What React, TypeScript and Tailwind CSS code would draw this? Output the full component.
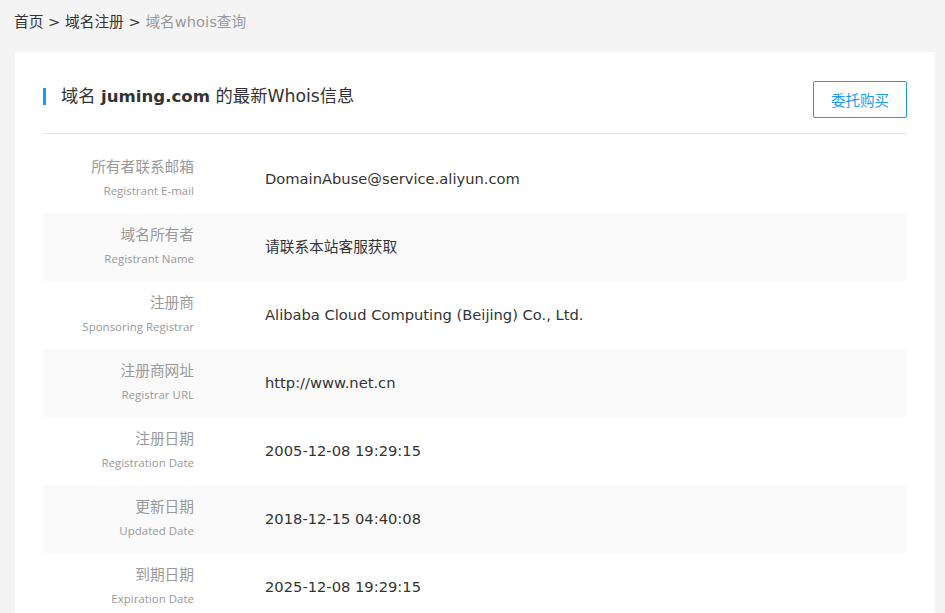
import React from "react";

const rows = [
  { cn: "所有者联系邮箱", en: "Registrant E-mail", v: "DomainAbuse@service.aliyun.com" },
  { cn: "域名所有者", en: "Registrant Name", v: "请联系本站客服获取" },
  { cn: "注册商", en: "Sponsoring Registrar", v: "Alibaba Cloud Computing (Beijing) Co., Ltd." },
  { cn: "注册商网址", en: "Registrar URL", v: "http://www.net.cn" },
  { cn: "注册日期", en: "Registration Date", v: "2005-12-08 19:29:15" },
  { cn: "更新日期", en: "Updated Date", v: "2018-12-15 04:40:08" },
  { cn: "到期日期", en: "Expiration Date", v: "2025-12-08 19:29:15" },
];

export default function App() {
  return (
    <div className="min-h-[613px] bg-[#f4f4f4] pl-[15px] pr-[10px] font-[family-name:'DejaVu_Sans','Noto_Sans_CJK_SC',sans-serif]">
      <div className="h-[52px] -ml-px pt-[11px] text-[14.7px] leading-[22px] text-[#333] whitespace-pre">
        <span>首页 &gt; 域名注册 &gt; </span>
        <span className="text-[#999]">域名whois查询</span>
      </div>
      <div className="bg-white px-[28px] pt-[29px] pb-[20px]">
        <div className="flex items-center justify-between border-b border-[#e6e6e6] pb-[15px]">
          <div className="-mt-[6px] flex items-center">
            <div className="h-[17px] w-[3px] bg-[#1a9bf0]" />
            <div className="ml-[15px] text-[17.3px] leading-[24px] text-[#333]">
              域名 <span className="font-bold text-[16.6px]">juming.com</span> 的最新Whois信息
            </div>
          </div>
          <button className="h-[37px] w-[94px] rounded-[2px] border border-[#1a9bf0] bg-white font-[family-name:'Noto_Sans_CJK_SC',sans-serif] text-[14.5px] text-[#1a9bf0]">
            委托购买
          </button>
        </div>
        <div className="mt-[11px]">
          {rows.map((r, i) => (
            <div
              key={r.cn}
              className={`flex h-[68px] ${i % 2 === 1 ? "bg-[#fafafa]" : "bg-white"}`}
            >
              <div className="w-[151px] pt-[10px] text-right">
                <div className="font-[family-name:'Noto_Sans_CJK_SC',sans-serif] text-[14.7px] leading-[21px] text-[#999]">
                  {r.cn}
                </div>
                <div className="mt-[7px] font-[family-name:'Open_Sans',sans-serif] text-[11.5px] leading-[16px] text-[#999]">
                  {r.en}
                </div>
              </div>
              <div className="flex items-center pl-[71px] text-[14.7px] text-[#333]">
                {r.v}
              </div>
            </div>
          ))}
        </div>
      </div>
    </div>
  );
}
